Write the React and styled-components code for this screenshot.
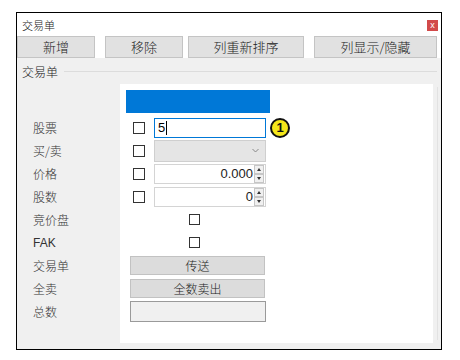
import styled, { createGlobalStyle } from "styled-components";

const GlobalStyle = createGlobalStyle`
  body {
    margin: 0;
    background: #fff;
    font-family: "Noto Sans CJK SC", "Liberation Sans", sans-serif;
  }
`;

const Window = styled.div`
  box-sizing: border-box;
  margin: 12px 0 0 16px;
  width: 426px;
  height: 338px;
  border: 1px solid #000;
  background: #fff;
  display: flex;
  flex-direction: column;
`;

const TitleBar = styled.div`
  height: 23px;
  display: flex;
  align-items: center;
  justify-content: space-between;
  padding: 0 3px 0 5px;
  font-size: 11px;
  font-weight: 300;
  color: #222;
`;

const CloseBox = styled.div`
  width: 11px;
  height: 11px;
  margin-top: 1px;
  background: #d24a4a;
  color: #fff;
  font-family: "Liberation Sans", sans-serif;
  font-size: 9px;
  line-height: 10px;
  text-align: center;
`;

const Toolbar = styled.div`
  height: 22px;
  display: flex;
`;

const ToolButton = styled.button`
  box-sizing: border-box;
  width: ${(p) => p.$w}px;
  margin-left: ${(p) => p.$ml || 0}px;
  height: 22px;
  padding: 0;
  border: 1px solid #c4c4c4;
  background: #e1e1e1;
  font-family: "Noto Sans CJK SC", sans-serif;
  font-size: 13px;
  font-weight: 300;
  color: #222;
  line-height: 20px;
`;

const GroupArea = styled.div`
  flex: 1;
  background: #f0f0f0;
  display: flex;
  flex-direction: column;
  padding-bottom: 6px;
`;

const Legend = styled.div`
  height: 26px;
  display: flex;
  align-items: center;
  padding: 0 4px 0 5px;
  font-size: 12px;
  font-weight: 300;
  color: #222;

  &::after {
    content: "";
    flex: 1;
    margin-left: 6px;
    border-top: 1px solid #dcdcdc;
  }
`;

const FormGrid = styled.div`
  display: grid;
  grid-template-columns: 103px 313px;
  grid-template-rows: 32px repeat(9, 23px) 20px;
  border-right: 4px solid #f0f0f0;
  width: 416px;
  box-shadow: 4px 0 0 -3px #e2e2e2;
`;

const Label = styled.div`
  display: flex;
  align-items: center;
  padding-left: 16px;
  font-size: 12px;
  font-weight: 300;
  color: #333;
  font-family: ${(p) => (p.$latin ? '"Liberation Sans", sans-serif' : '"Noto Sans CJK SC", sans-serif')};
`;

const Cell = styled.div`
  background: #fff;
  display: flex;
  align-items: ${(p) => (p.$top ? "flex-start" : "center")};
  padding-left: ${(p) => p.$pl ?? 13}px;
  padding-top: ${(p) => p.$pt || 0}px;
`;

const BlueBar = styled.div`
  width: 144px;
  height: 23px;
  background: #0078d7;
`;

const Check = styled.span`
  box-sizing: border-box;
  display: inline-block;
  width: ${(p) => p.$size || 12}px;
  height: ${(p) => p.$size || 12}px;
  border: 1px solid #333;
  background: #fff;
  margin-right: ${(p) => p.$mr ?? 9}px;
`;

const TextInput = styled.div`
  box-sizing: border-box;
  width: 112px;
  height: 20px;
  border: 1px solid #0078d7;
  background: #fff;
  font-family: "Liberation Sans", sans-serif;
  font-size: 13px;
  line-height: 18px;
  padding-left: 3px;
  color: #000;
  display: flex;
  align-items: center;

  &::after {
    content: "";
    width: 1px;
    height: 14px;
    background: #000;
    margin-left: 1px;
  }
`;

const Combo = styled.div`
  box-sizing: border-box;
  width: 112px;
  height: 22px;
  border: 1px solid #cfcfcf;
  background: #e5e5e5;
  display: flex;
  align-items: center;
  justify-content: flex-end;
  padding-right: 6px;
`;

const SpinBox = styled.div`
  box-sizing: border-box;
  width: 112px;
  height: 20px;
  border: 1px solid #d4d4d4;
  background: #fff;
  display: flex;
  align-items: center;
  justify-content: flex-end;
  font-family: "Liberation Sans", sans-serif;
  font-size: 13px;
  color: #222;
  padding-right: 1px;
`;

const SpinButtons = styled.div`
  display: flex;
  flex-direction: column;
  margin-left: 1px;
  height: 18px;
`;

const SpinArrow = styled.div`
  box-sizing: border-box;
  width: 10px;
  height: 9px;
  border: 1px solid #c6c6c6;
  background: #f0f0f0;
  display: flex;
  align-items: center;
  justify-content: center;

  &::before {
    content: "";
    border-left: 2.5px solid transparent;
    border-right: 2.5px solid transparent;
    ${(p) => (p.$down ? "border-top: 3px solid #333;" : "border-bottom: 3px solid #333;")}
  }
`;

const Marker = styled.span`
  box-sizing: border-box;
  width: 20px;
  height: 20px;
  margin-left: 4px;
  border-radius: 50%;
  border: 2px solid #111;
  background: #f6e71a;
  font-family: "Liberation Sans", sans-serif;
  font-weight: bold;
  font-size: 13px;
  line-height: 16px;
  text-align: center;
  color: #111;
`;

const ActionButton = styled.button`
  box-sizing: border-box;
  width: 135px;
  height: 19px;
  margin-left: -3px;
  padding: 0;
  border: 1px solid #c2c2c2;
  background: ${(p) => (p.$empty ? "#f0f0f0" : "#dcdcdc")};
  border-color: ${(p) => (p.$empty ? "#9a9a9a" : "#c2c2c2")};
  ${(p) => p.$empty && "height: 21px; width: 136px;"}
  font-family: "Noto Sans CJK SC", sans-serif;
  font-size: 12px;
  font-weight: 300;
  line-height: 17px;
  color: #222;
`;

function Chevron() {
  return (
    <svg width="7" height="5" viewBox="0 0 7 5">
      <path d="M0.5 1 L3.5 4 L6.5 1" fill="none" stroke="#888" strokeWidth="1" />
    </svg>
  );
}

function Spin({ value }) {
  return (
    <SpinBox>
      {value}
      <SpinButtons>
        <SpinArrow />
        <SpinArrow $down />
      </SpinButtons>
    </SpinBox>
  );
}

export default function App() {
  return (
    <>
      <GlobalStyle />
      <Window>
        <TitleBar>
          <span>交易单</span>
          <CloseBox>x</CloseBox>
        </TitleBar>
        <Toolbar>
          <ToolButton $w={78}>新增</ToolButton>
          <ToolButton $w={78} $ml={10}>移除</ToolButton>
          <ToolButton $w={116} $ml={5}>列重新排序</ToolButton>
          <ToolButton $w={123} $ml={10}>列显示/隐藏</ToolButton>
        </Toolbar>
        <GroupArea>
          <Legend>交易单</Legend>
          <FormGrid>
            <Label />
            <Cell $top $pl={6} $pt={6}>
              <BlueBar />
            </Cell>

            <Label>股票</Label>
            <Cell>
              <Check />
              <TextInput>5</TextInput>
              <Marker>1</Marker>
            </Cell>

            <Label>买/卖</Label>
            <Cell>
              <Check />
              <Combo>
                <Chevron />
              </Combo>
            </Cell>

            <Label>价格</Label>
            <Cell>
              <Check />
              <Spin value="0.000" />
            </Cell>

            <Label>股数</Label>
            <Cell>
              <Check />
              <Spin value="0" />
            </Cell>

            <Label>竞价盘</Label>
            <Cell $pl={69}>
              <Check $size={11} />
            </Cell>

            <Label $latin>FAK</Label>
            <Cell $pl={69}>
              <Check $size={11} />
            </Cell>

            <Label>交易单</Label>
            <Cell>
              <ActionButton>传送</ActionButton>
            </Cell>

            <Label>全卖</Label>
            <Cell>
              <ActionButton>全数卖出</ActionButton>
            </Cell>

            <Label>总数</Label>
            <Cell>
              <ActionButton $empty />
            </Cell>

            <Label />
            <Cell />
          </FormGrid>
        </GroupArea>
      </Window>
    </>
  );
}
